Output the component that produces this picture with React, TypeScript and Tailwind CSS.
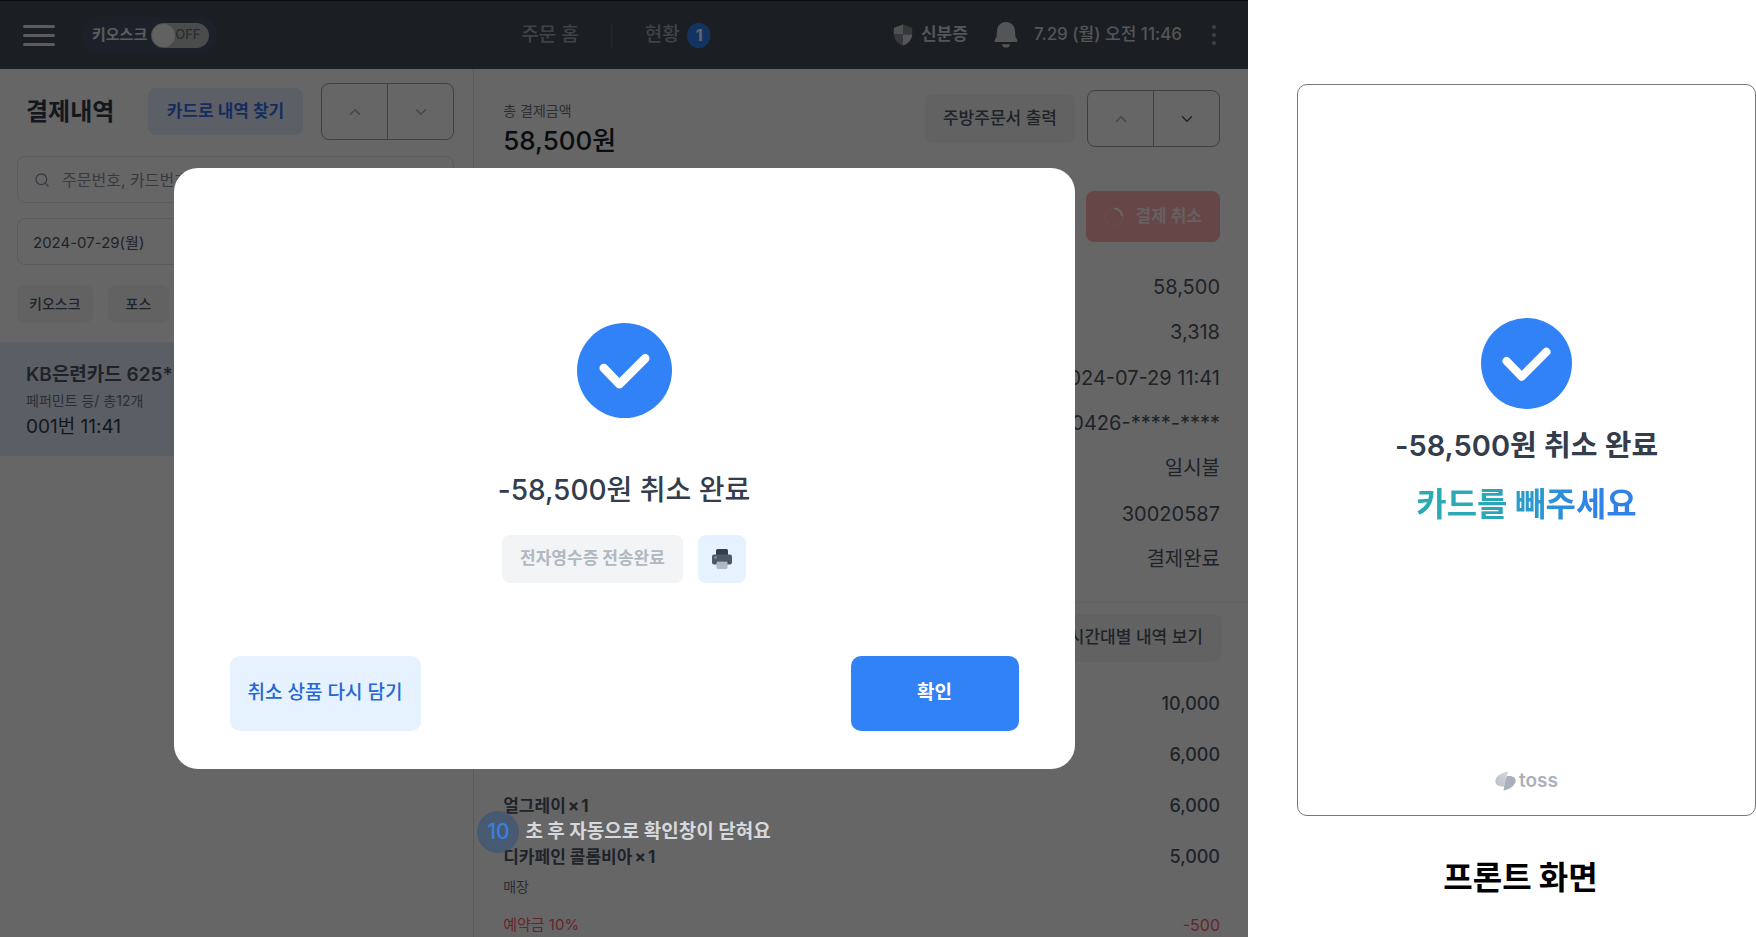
import React from "react";
import { ChevronDown, ChevronUp, Search } from "lucide-react";

function CheckCircle({ className }: { className: string }) {
  return (
    <svg viewBox="0 0 94 94" className={className} aria-hidden="true">
      <circle cx="47" cy="47" r="47" fill="#3182f6" />
      <path d="M26.500 44.500L42 60.500L67.500 35" fill="none" stroke="#fff" strokeWidth="8.500" strokeLinecap="round" strokeLinejoin="round" />
    </svg>
  );
}

function PrinterIcon() {
  return (
    <svg viewBox="0 0 20 20" className="h-5 w-5" aria-hidden="true">
      <rect x="4" y="0" width="12" height="8" rx="1.500" fill="#333d4b" />
      <rect x="0" y="5.500" width="20" height="10" rx="2" fill="#4e5968" />
      <circle cx="3.500" cy="8.500" r="1.200" fill="#8b95a1" />
      <rect x="3" y="12" width="14" height="2" rx="1" fill="#333d4b" />
      <path d="M4.500 12.500h11v6a1.500 1.500 0 0 1-1.500 1.500h-8a1.500 1.500 0 0 1-1.500-1.500z" fill="#b0b8c1" />
    </svg>
  );
}

function ShieldIcon() {
  return (
    <svg viewBox="0 0 20 22" className="h-[22px] w-5" aria-hidden="true">
      <path d="M10 .5 1.600 3.600A1.500 1.500 0 0 0 .8 5v5.500H10z" fill="#c4c7cc" />
      <path d="M10 .5l8.400 3.100a1.500 1.500 0 0 1 .8 1.400v5.500H10z" fill="#888c93" />
      <path d="M.8 10.500H10V21.500C4.500 19.500 1.200 15.500.8 10.500z" fill="#888c93" />
      <path d="M19.200 10.500H10V21.500c5.500-2 8.800-6 9.200-11z" fill="#d6d8dc" />
    </svg>
  );
}

function BellIcon() {
  return (
    <svg viewBox="0 0 24 28" className="h-7 w-6" aria-hidden="true">
      <path d="M12 1C6.800 1 3.300 4.900 3 9.800L2.600 15.500.7 19.200C.3 20.200.9 21 1.900 21h20.200c1 0 1.600-.8 1.200-1.800l-1.900-3.700-.4-5.700C20.700 4.900 17.200 1 12 1z" fill="#d1d4d8" />
      <path d="M7.800 23.200h8.400a4.300 4.300 0 0 1-8.400 0z" fill="#d1d4d8" />
    </svg>
  );
}

function TossMark() {
  return (
    <svg viewBox="0 0 21 20" className="h-5 w-[21px]" aria-hidden="true">
      <defs>
        <linearGradient id="markLeft" x1="0" y1="1" x2="1" y2="0">
          <stop offset="0" stopColor="#b9bfc8" />
          <stop offset="1" stopColor="#d5d9df" />
        </linearGradient>
      </defs>
      <path d="M13 .6C6 2 .4 5.500.4 10.200.4 13.500 3.500 15.500 9 15.500c1-4 2.500-8 4-14.900z" fill="url(#markLeft)" />
      <path d="M12.200 5c5-.5 8.500 1 8.500 4.600 0 5-6 9-12.200 9.900.9-5 1-9.500 3.700-14.500z" fill="#a9b0bb" />
    </svg>
  );
}

function Stepper({ label, downActive = false }: { label: string; downActive?: boolean }) {
  return (
    <div role="group" aria-label={label} className="flex h-[57px] w-[133px] shrink-0 divide-x divide-[#9aa1ab] rounded-lg border border-[#9aa1ab]">
      <button type="button" aria-label="위로" className="flex flex-1 items-center justify-center text-[#a8afb8]">
        <ChevronUp className="h-[18px] w-[18px]" />
      </button>
      <button
        type="button"
        aria-label="아래로"
        className={downActive ? "flex flex-1 items-center justify-center text-[#4e5968]" : "flex flex-1 items-center justify-center text-[#a8afb8]"}
      >
        <ChevronDown className="h-[18px] w-[18px]" />
      </button>
    </div>
  );
}

function TopBar() {
  return (
    <header className="relative flex h-[69px] shrink-0 items-center justify-between border-t border-[#20242b] bg-[#444c58] pr-[26px] pl-[23px] text-[#d1d4d8]">
      <div className="flex items-center gap-[26px]">
        <button type="button" aria-label="메뉴" className="flex w-8 flex-col gap-[6px]">
          <span className="h-[3px] rounded-full bg-[#e5e7ea]" />
          <span className="h-[3px] rounded-full bg-[#e5e7ea]" />
          <span className="h-[3px] rounded-full bg-[#e5e7ea]" />
        </button>
        <label className="flex h-9 items-center gap-1 rounded-full bg-[#465468] pr-2 pl-[11px] text-[15px] font-bold text-[#e5e7ea]">
          키오스크
          <input type="checkbox" role="switch" className="peer sr-only" />
          <span className="flex h-[25px] w-[58px] items-center rounded-full bg-[#b9bcbc] pl-px text-[13px] font-medium text-[#6b7178]">
            <span className="h-[23px] w-[23px] rounded-full bg-[#f2f2f2]" />
            OFF
          </span>
        </label>
      </div>

      <nav className="absolute inset-y-0 left-1/2 flex -translate-x-1/2 items-center pr-4 text-[19px] font-medium text-[#a0a6b0]">
        <a href="#home" className="pr-8">주문 홈</a>
        <span className="h-6 w-px bg-[#646b76]" />
        <a href="#status" className="flex items-center gap-2 pl-[33px]">
          현황
          <span className="flex h-[25px] w-[23px] items-center justify-center rounded-full bg-[#3182f6] text-base font-bold text-white">1</span>
        </a>
      </nav>

      <div className="flex items-center text-[17px] font-medium">
        <button type="button" className="flex items-center gap-2 font-bold">
          <ShieldIcon />
          신분증
        </button>
        <button type="button" aria-label="알림" className="ml-[26px]">
          <BellIcon />
        </button>
        <time className="ml-4">7.29 (월) 오전 11:46</time>
        <button type="button" aria-label="더보기" className="ml-6 flex w-4 flex-col items-center gap-1 text-[#a0a6b0]">
          <span className="h-1 w-1 rounded-full bg-current" />
          <span className="h-1 w-1 rounded-full bg-current" />
          <span className="h-1 w-1 rounded-full bg-current" />
        </button>
      </div>
    </header>
  );
}

function HistoryPanel() {
  return (
    <section className="flex w-[38%] shrink-0 flex-col border-r border-[#dcdfe3] pt-[14px]">
      <div className="flex items-center justify-between pr-[19px] pl-[26px]">
        <h1 className="text-2xl font-bold text-[#333d4b]">결제내역</h1>
        <div className="flex items-center gap-[18px]">
          <button type="button" className="h-[47px] rounded-lg bg-[#e6efff] px-[19px] text-[17px] font-bold whitespace-nowrap text-[#3a6fe8]">
            카드로 내역 찾기
          </button>
          <Stepper label="결제내역 이동" />
        </div>
      </div>

      <div className="flex flex-col gap-[15px] pt-4 pr-[19px] pl-[17px]">
        <label className="flex h-[47px] items-center gap-3 rounded-lg border border-[#e0e3e6] pl-4 text-[#8b95a1]">
          <Search className="h-4 w-4 shrink-0" />
          <input type="text" aria-label="내역 검색" placeholder="주문번호, 카드번호" className="w-full min-w-0 bg-transparent text-base placeholder:text-[#8b95a1]" />
        </label>
        <input
          type="text"
          aria-label="날짜"
          defaultValue="2024-07-29(월)"
          className="h-[47px] w-full rounded-lg border border-[#e0e3e6] bg-transparent px-[15px] text-[15px] text-[#4e5968]"
        />
      </div>

      <div className="flex gap-[15px] pt-5 pl-[17px] text-sm font-medium text-[#4e5968]">
        <button type="button" className="h-[38px] rounded-lg bg-[#f5f6f8] px-3">키오스크</button>
        <button type="button" className="h-[38px] rounded-lg bg-[#f5f6f8] px-[18px]">포스</button>
      </div>

      <article className="mt-[19px] h-[114px] bg-[#e4ecfb] px-[26px] pt-5 leading-[26px] whitespace-nowrap">
        <h2 className="text-[19px] font-semibold text-[#4e5968]">KB은련카드 625*</h2>
        <p className="text-sm leading-[26px] text-[#6b7684]">페퍼민트 등/ 총12개</p>
        <p className="text-[19px] leading-[26px] text-[#333d4b]">001번 11:41</p>
      </article>
    </section>
  );
}

const details = ["58,500", "3,318", "2024-07-29 11:41", "6258-0426-****-****", "일시불", "30020587", "결제완료"];

const items = [
  { name: "", count: 0, price: "10,000" },
  { name: "", count: 0, price: "6,000" },
  { name: "얼그레이", count: 1, price: "6,000" },
  { name: "디카페인 콜롬비아", count: 1, price: "5,000" },
];

function DetailPanel() {
  return (
    <section className="flex min-w-0 flex-1 flex-col pt-[21px]">
      <div className="flex items-start justify-between pr-7 pl-[29px]">
        <div className="pt-[11px]">
          <p className="text-sm leading-5 text-[#6b7684]">총 결제금액</p>
          <p className="pt-1 text-[26px] leading-8 font-medium text-[#191f28]">58,500원</p>
        </div>
        <div className="flex items-center gap-3">
          <button type="button" className="h-[49px] rounded-lg bg-[#f5f6f8] px-[18px] text-[17px] font-medium text-[#4e5968]">
            주방주문서 출력
          </button>
          <Stepper label="상세 내역 이동" downActive />
        </div>
      </div>

      <button type="button" disabled className="mt-[34px] mr-7 flex h-[51px] items-center gap-[11px] self-end rounded-lg bg-[#ffafb2] px-[18px] text-[17px] font-bold text-[#fff0f0]">
        <svg viewBox="0 0 20 20" className="h-5 w-5" fill="none" strokeLinecap="round" aria-hidden="true">
          <circle cx="10" cy="10" r="9" stroke="#ffc6c8" strokeWidth="1" />
          <path d="M11 1.500A8.500 8.500 0 0 1 18 8" stroke="#fff" strokeWidth="2" />
        </svg>
        결제 취소
      </button>

      <ul className="mt-[22px] flex h-[318px] flex-col justify-around pr-7 pl-7 text-right text-xl leading-7 text-[#4e5968]">
        {details.map((value) => (
          <li key={value}>{value}</li>
        ))}
      </ul>

      <hr className="mt-5 border-[#eef0f2]" />

      <button type="button" className="mt-[11px] mr-[26px] h-12 self-end rounded-lg bg-[#f5f6f8] px-[19px] text-[17px] font-medium text-[#4e5968]">
        시간대별 내역 보기
      </button>

      <ul className="mt-8 flex flex-col gap-[31px] pr-7 pl-[29px]">
        {items.map((item, index) => (
          <li key={index} className="flex justify-between leading-5 text-[#4e5968]">
            <span className="text-[17px] leading-5 font-bold">
              {item.name}
              {item.count > 0 && (
                <>
                  <span className="mx-0.5">×</span>
                  {item.count}
                </>
              )}
            </span>
            <span className="text-lg leading-5 font-medium">{item.price}</span>
          </li>
        ))}
      </ul>
      <p className="mt-[10px] px-[29px] text-sm leading-5 text-[#6b7684]">매장</p>
      <p className="mt-[18px] flex justify-between pr-7 pl-[29px] leading-5 text-[#ff5c6c]">
        <span className="text-[15px] leading-5">예약금 10%</span>
        <span className="text-base leading-5">-500</span>
      </p>
    </section>
  );
}

function CancelDialog() {
  return (
    <div className="absolute inset-0 flex items-center justify-center bg-black/60">
      <div className="relative w-[901px] max-w-[92%]">
        <div role="dialog" aria-modal="true" aria-labelledby="cancel-title" className="flex flex-col rounded-3xl bg-white px-14 pt-[155px] pb-[38px]">
          <CheckCircle className="h-[95px] w-[95px] self-center" />
          <h2 id="cancel-title" className="mt-[52px] text-center text-[28px] leading-10 font-medium text-[#333d4b]">
            -58,500원 취소 완료
          </h2>
          <div className="mt-[25px] flex justify-center gap-[15px]">
            <button type="button" disabled className="h-12 rounded-lg bg-[#f2f4f6] px-[18px] text-[17px] font-bold text-[#b0b8c1]">
              전자영수증 전송완료
            </button>
            <button type="button" aria-label="영수증 인쇄" className="flex h-12 w-12 items-center justify-center rounded-lg bg-[#e6f2ff]">
              <PrinterIcon />
            </button>
          </div>
          <div className="mt-[73px] flex justify-between text-[19px]">
            <button type="button" className="h-[75px] rounded-[10px] bg-[#e6f2ff] px-[18px] font-medium text-[#2566d8]">
              취소 상품 다시 담기
            </button>
            <button type="button" className="h-[75px] w-[168px] rounded-[10px] bg-[#3182f6] font-bold text-white">
              확인
            </button>
          </div>
        </div>
        <p className="absolute inset-x-0 top-full mt-[42px] flex items-center justify-center gap-[6px] text-[19px] font-bold text-[#d5d8dd]">
          <span className="flex h-[42px] w-[42px] items-center justify-center rounded-full bg-[#34507a]/60 text-[21px] font-medium text-[#3b7fe0]">10</span>
          초 후 자동으로 확인창이 닫혀요
        </p>
      </div>
    </div>
  );
}

function FrontScreen() {
  return (
    <aside className="flex flex-col pt-[84px] pl-[49px]">
      <div className="flex flex-col items-center rounded-[10px] border border-[#777] bg-white pt-[233px] pb-6">
        <CheckCircle className="h-[91px] w-[91px]" />
        <p className="mt-[17px] text-[29px] leading-10 font-semibold text-[#333d4b]">-58,500원 취소 완료</p>
        <p className="mt-[14px] bg-linear-to-r from-[#2ba9b4] from-30% to-[#3182e6] to-80% bg-clip-text text-[33px] leading-[48px] font-bold text-transparent">
          카드를 빼주세요
        </p>
        <div className="mt-[243px] flex items-center gap-[3px] text-[#a9b0bb]">
          <TossMark />
          <span className="text-[19px] leading-5 font-semibold">toss</span>
        </div>
      </div>
      <p className="mt-[35px] pr-3 text-center font-['Noto_Sans_CJK_KR',sans-serif] text-[32px] leading-[48px] font-bold text-black">프론트 화면</p>
    </aside>
  );
}

export default function App() {
  return (
    <main className="grid min-h-screen grid-cols-[minmax(0,1248fr)_minmax(0,508fr)] bg-white font-['Inter','Noto_Sans_CJK_KR',sans-serif]">
      <div className="relative flex flex-col overflow-hidden bg-white">
        <TopBar />
        <div className="flex flex-1">
          <HistoryPanel />
          <DetailPanel />
        </div>
        <CancelDialog />
      </div>
      <FrontScreen />
    </main>
  );
}
